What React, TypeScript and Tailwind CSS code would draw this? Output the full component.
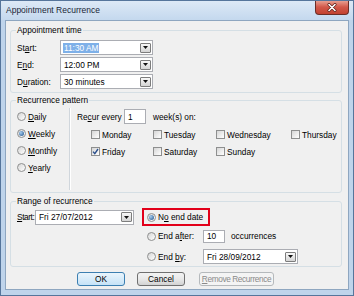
import React from "react";

function U({ c }: { c: string }) {
  return <span className="underline decoration-[1px] underline-offset-[1px]">{c}</span>;
}

function DropBtn() {
  return (
    <div className="mr-[1px] flex h-[10px] w-[11px] shrink-0 items-center justify-center rounded-[1px] border border-[#7d7d7d] bg-linear-to-b from-[#f8f8f8] to-[#d4d4d4]">
      <svg width="5" height="3" viewBox="0 0 5 3">
        <path d="M0 0h5L2.5 3z" fill="#111" />
      </svg>
    </div>
  );
}

function Combo({ w, children }: { w: string; children: React.ReactNode }) {
  return (
    <div className={`flex h-[15px] shrink-0 items-center justify-between border border-[#abadb3] bg-white pl-[2px] ${w}`}>
      <div className="whitespace-nowrap">{children}</div>
      <DropBtn />
    </div>
  );
}

function Radio({ checked }: { checked?: boolean }) {
  return (
    <div className="flex h-[9px] w-[9px] shrink-0 items-center justify-center rounded-full border border-[#8e8f8f] bg-linear-to-br from-[#d6d6d6] to-white">
      {checked && (
        <div className="h-[5px] w-[5px] rounded-full bg-[radial-gradient(circle_at_35%_35%,#a6cdf0,#1d4f87)]" />
      )}
    </div>
  );
}

function Check({ checked }: { checked?: boolean }) {
  return (
    <div className="flex h-[9px] w-[9px] shrink-0 items-center justify-center border border-[#8e8f8f] bg-linear-to-br from-[#d6d6d6] to-white">
      {checked && (
        <svg width="7" height="7" viewBox="0 0 7 7">
          <path d="M1 3.6 L2.8 5.6 L6 1" stroke="#2a4f8c" strokeWidth="1.4" fill="none" />
        </svg>
      )}
    </div>
  );
}

function Day({ label, checked }: { label: string; checked?: boolean }) {
  return (
    <div className="flex h-[17px] items-center gap-[2px]">
      <Check checked={checked} />
      <span>{label}</span>
    </div>
  );
}

function RadioRow({ label, checked }: { label: React.ReactNode; checked?: boolean }) {
  return (
    <div className="flex h-[17px] items-center gap-[2px]">
      <Radio checked={checked} />
      <span>{label}</span>
    </div>
  );
}

function CloseBtn() {
  return (
    <div className="-mt-[1px] mr-[4px] flex h-[15px] w-[34px] items-center justify-center rounded-b-[4px] border border-t-0 border-[#6b2d26] bg-linear-to-b from-[#e9a89b] via-[#d2584a] to-[#c2412f]">
      <svg width="10" height="9" viewBox="0 0 10 9">
        <path d="M2 1.5 L8 7.5 M8 1.5 L2 7.5" stroke="#5a1f18" strokeWidth="3" strokeLinecap="round" />
        <path d="M2 1.5 L8 7.5 M8 1.5 L2 7.5" stroke="#fff" strokeWidth="1.6" strokeLinecap="round" />
      </svg>
    </div>
  );
}

export default function App() {
  return (
    <div className="h-[296px] w-[354px] overflow-hidden border border-[#56759b] bg-[#bfd4eb] font-['Liberation_Sans',Arial,sans-serif] text-[8.3px] leading-[10px] text-black">
      <div className="flex h-[19px] items-start justify-between bg-linear-to-b from-[#dde9f6] to-[#c4d8ee]">
        <div className="pl-[5px] pt-[4px] text-[8.5px] text-[#1a2636]">Appointment Recurrence</div>
        <CloseBtn />
      </div>
      <div className="ml-[4px] w-[344px] border border-[#8ea6c0] bg-[#f0f0f0] pb-[3px]">
        {/* Appointment time */}
        <fieldset className="ml-[4px] mr-[6px] mt-[4px] rounded-[3px] border border-[#d5dfe5]">
          <legend className="ml-[5px] px-[1px]">Appointment time</legend>
          <div className="flex flex-col gap-[2px] pb-[3px] pl-[6px] pt-[5px]">
            <div className="flex h-[15px] items-center">
              <span className="w-[43px]">
                St<U c="a" />rt:
              </span>
              <Combo w="w-[93px]">
                <span className="bg-[#7eb0e8] px-[1px] text-white">11:30 AM</span>
              </Combo>
            </div>
            <div className="flex h-[15px] items-center">
              <span className="w-[43px]">
                E<U c="n" />d:
              </span>
              <Combo w="w-[93px]">
                <span className="px-[1px]">12:00 PM</span>
              </Combo>
            </div>
            <div className="flex h-[15px] items-center">
              <span className="w-[43px]">
                D<U c="u" />ration:
              </span>
              <Combo w="w-[93px]">
                <span className="px-[1px]">30 minutes</span>
              </Combo>
            </div>
          </div>
        </fieldset>

        {/* Recurrence pattern */}
        <fieldset className="ml-[4px] mr-[6px] mt-[2px] rounded-[3px] border border-[#d5dfe5]">
          <legend className="ml-[5px] px-[1px]">Recurrence pattern</legend>
          <div className="flex h-[87px]">
            <div className="flex w-[58px] flex-col pl-[6px] pt-[3px]">
              <RadioRow label={<><U c="D" />aily</>} />
              <RadioRow label={<><U c="W" />eekly</>} checked />
              <RadioRow label={<><U c="M" />onthly</>} />
              <RadioRow label={<><U c="Y" />early</>} />
            </div>
            <div className="mb-[2px] mt-[3px] w-[2px] border-l border-r border-l-[#d0d6dc] border-r-white" />
            <div className="flex flex-col pl-[6px] pt-[4px]">
              <div className="flex h-[15px] items-center">
                <span className="w-[47px] whitespace-nowrap">
                  Re<U c="c" />ur every
                </span>
                <div className="flex h-[15px] w-[22px] items-center border border-[#abadb3] bg-white pl-[3px]">1</div>
                <span className="ml-[7px]">week(s) on:</span>
              </div>
              <div className="ml-[14px] mt-[2px] grid grid-cols-[62px_63px_75px_auto]">
                <Day label="Monday" />
                <Day label="Tuesday" />
                <Day label="Wednesday" />
                <Day label="Thursday" />
                <Day label="Friday" checked />
                <Day label="Saturday" />
                <Day label="Sunday" />
              </div>
            </div>
          </div>
        </fieldset>

        {/* Range of recurrence */}
        <fieldset className="ml-[4px] mr-[6px] mt-[3px] rounded-[3px] border border-[#d5dfe5]">
          <legend className="ml-[5px] px-[1px]">Range of recurrence</legend>
          <div className="flex pb-[2px] pt-[2px]">
            <div className="flex h-[18px] w-[131px] items-center pl-[6px]">
              <span className="w-[18px] whitespace-nowrap tracking-[-0.4px]">
                <U c="S" />tart:
              </span>
              <Combo w="w-[99px]">
                <span className="px-[1px]">Fri 27/07/2012</span>
              </Combo>
            </div>
            <div className="flex flex-col">
              <div className="flex h-[18px] w-[68px] items-center gap-[2px] border-2 border-[#e2001a] pl-[3px]">
                <Radio checked />
                <span className="whitespace-nowrap">
                  N<U c="o" /> end date
                </span>
              </div>
              <div className="mt-[3px] flex h-[14px] items-center pl-[5px]">
                <Radio />
                <span className="ml-[2px] w-[45px] whitespace-nowrap">
                  End a<U c="f" />ter:
                </span>
                <div className="flex h-[13px] w-[22px] items-center border border-[#abadb3] bg-white pl-[3px]">10</div>
                <span className="ml-[6px]">occurrences</span>
              </div>
              <div className="mt-[6px] flex h-[15px] items-center pl-[5px]">
                <Radio />
                <span className="ml-[2px] w-[45px] whitespace-nowrap">
                  End <U c="b" />y:
                </span>
                <Combo w="w-[95px]">
                  <span className="px-[1px]">Fri 28/09/2012</span>
                </Combo>
              </div>
            </div>
          </div>
        </fieldset>

        {/* Buttons */}
        <div className="mt-[5px] flex h-[14px] pl-[71px]">
          <div className="flex w-[48px] items-center justify-center rounded-[3px] border border-[#3c7fb1] bg-linear-to-b from-[#eaf5fc] to-[#c6e3f7]">
            OK
          </div>
          <div className="ml-[12px] flex w-[48px] items-center justify-center rounded-[3px] border border-[#707070] bg-linear-to-b from-[#f3f3f3] via-[#e9e9e9] to-[#d2d2d2]">
            Cancel
          </div>
          <div className="ml-[14px] flex w-[75px] items-center justify-center whitespace-nowrap rounded-[3px] border border-[#b5b9bc] bg-[#f4f4f4] tracking-[-0.4px] text-[#8a8a8a]">
            <span>
              <U c="R" />emove Recurrence
            </span>
          </div>
        </div>
      </div>
    </div>
  );
}
